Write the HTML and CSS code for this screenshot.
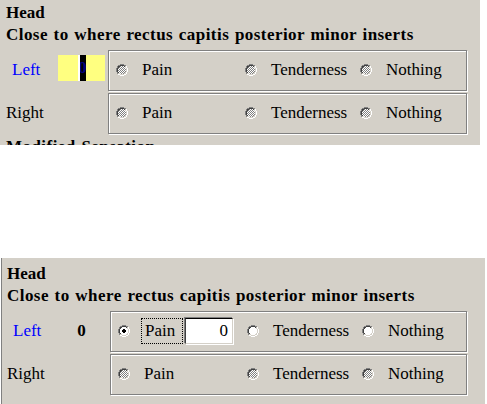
FILE: index.html
```html
<!DOCTYPE html>
<html>
<head>
<meta charset="utf-8">
<link rel="stylesheet" href="styles.css">
</head>
<body>
<svg class="defs" width="0" height="0" aria-hidden="true">
  <defs>
    <pattern id="chk" width="2" height="2" patternUnits="userSpaceOnUse">
      <rect width="2" height="2" fill="#ffffff"/>
      <rect width="1" height="1" fill="#808080"/>
      <rect x="1" y="1" width="1" height="1" fill="#808080"/>
    </pattern>
    <symbol id="rframe" viewBox="0 0 12 12">
      <path fill="#808080" d="M4 0h4v1h-4z M2 1h2v1h-2z M8 1h2v1h-2z M1 2h1v2h-1z M0 4h1v4h-1z M1 8h1v2h-1z"/>
      <path fill="#ffffff" d="M10 2h1v2h-1z M11 4h1v4h-1z M10 8h1v2h-1z M2 10h2v1h-2z M8 10h2v1h-2z M4 11h4v1h-4z"/>
      <path fill="#404040" d="M4 1h4v1h-4z M2 2h2v1h-2z M8 2h1v1h-1z M2 3h1v1h-1z M1 4h1v4h-1z M2 8h1v1h-1z"/>
      <path fill="#d4d0c8" d="M9 2h1v1h-1z M9 3h1v1h-1z M10 4h1v4h-1z M9 8h1v1h-1z M2 9h2v1h-2z M8 9h2v1h-2z M4 10h4v1h-4z"/>
    </symbol>
    <symbol id="rgray" viewBox="0 0 12 12">
      <path fill="url(#chk)" d="M4 2H8V3H9V4H10V8H9V9H8V10H4V9H3V8H2V4H3V3H4Z"/>
      <use href="#rframe" width="12" height="12"/>
    </symbol>
    <symbol id="rwhite" viewBox="0 0 12 12">
      <path fill="#ffffff" d="M4 2H8V3H9V4H10V8H9V9H8V10H4V9H3V8H2V4H3V3H4Z"/>
      <use href="#rframe" width="12" height="12"/>
    </symbol>
    <symbol id="ron" viewBox="0 0 12 12">
      <use href="#rwhite" width="12" height="12"/>
      <path fill="#000000" d="M5 4h2v1h-2z M4 5h4v2h-4z M5 7h2v1h-2z"/>
    </symbol>
  </defs>
</svg>

<div class="panel top">
  <div class="title">Head</div>
  <div class="title wide">Close to where rectus capitis posterior minor inserts</div>
  <div class="row first">
    <span class="side left">Left</span>
    <span class="val yellow"><span class="sel">0</span></span>
    <div class="group">
      <span class="opt"><svg class="radio" width="12" height="12"><use href="#rgray" width="12" height="12"/></svg>Pain</span>
      <span class="opt"><svg class="radio" width="12" height="12"><use href="#rgray" width="12" height="12"/></svg>Tenderness</span>
      <span class="opt"><svg class="radio" width="12" height="12"><use href="#rgray" width="12" height="12"/></svg>Nothing</span>
    </div>
  </div>
  <div class="row">
    <span class="side">Right</span>
    <span class="val"></span>
    <div class="group">
      <span class="opt"><svg class="radio" width="12" height="12"><use href="#rgray" width="12" height="12"/></svg>Pain</span>
      <span class="opt"><svg class="radio" width="12" height="12"><use href="#rgray" width="12" height="12"/></svg>Tenderness</span>
      <span class="opt"><svg class="radio" width="12" height="12"><use href="#rgray" width="12" height="12"/></svg>Nothing</span>
    </div>
  </div>
  <div class="title wide next">Modified Sensation</div>
</div>

<div class="panel bottom">
  <div class="title">Head</div>
  <div class="title wide">Close to where rectus capitis posterior minor inserts</div>
  <div class="row first">
    <span class="side left">Left</span>
    <span class="val bold">0</span>
    <div class="group">
      <span class="opt"><svg class="radio" width="12" height="12"><use href="#ron" width="12" height="12"/></svg><span class="focus">Pain</span><span class="input">0</span></span>
      <span class="opt"><svg class="radio" width="12" height="12"><use href="#rwhite" width="12" height="12"/></svg>Tenderness</span>
      <span class="opt"><svg class="radio" width="12" height="12"><use href="#rwhite" width="12" height="12"/></svg>Nothing</span>
    </div>
  </div>
  <div class="row">
    <span class="side">Right</span>
    <span class="val"></span>
    <div class="group">
      <span class="opt"><svg class="radio" width="12" height="12"><use href="#rgray" width="12" height="12"/></svg>Pain</span>
      <span class="opt"><svg class="radio" width="12" height="12"><use href="#rgray" width="12" height="12"/></svg>Tenderness</span>
      <span class="opt"><svg class="radio" width="12" height="12"><use href="#rgray" width="12" height="12"/></svg>Nothing</span>
    </div>
  </div>
</div>
</body>
</html>
```

FILE: styles.css
```css
html, body {
  margin: 0;
  padding: 0;
  background: #ffffff;
}

body {
  font-family: "Liberation Serif", "Times New Roman", serif;
  font-size: 17px;
  line-height: 20px;
  color: #000000;
}

.defs {
  display: block;
  width: 0;
  height: 0;
  overflow: hidden;
}

.panel {
  background: #d4d0c8;
  box-sizing: border-box;
  overflow: hidden;
}

.panel.top {
  width: 480px;
  height: 145px;
  padding: 2px 0 0 6px;
}

.panel.bottom {
  margin-top: 113px;
  margin-left: 1px;
  width: 484px;
  height: 146px;
  border-left: 1px solid #808080;
  padding: 5px 0 0 5px;
}

.title {
  font-weight: bold;
  line-height: 22px;
  white-space: nowrap;
}

.title.wide {
  letter-spacing: 0.45px;
  word-spacing: 1px;
}

.title.next {
  margin-top: 2px;
}

.row {
  display: grid;
  grid-template-columns: 52px 47px 362px;
  align-items: center;
  margin-top: 2px;
}

.row.first {
  margin-top: 4px;
}

.bottom .row {
  grid-template-columns: 51px 47px 362px;
}

.side {
  white-space: nowrap;
  margin-bottom: 2px;
}

.side.left {
  padding-left: 6px;
  color: #0000ff;
}

.val {
  height: 26px;
  display: flex;
  justify-content: center;
  align-items: center;
}

.val.bold {
  font-weight: bold;
  height: 20px;
  margin-bottom: 2px;
}

.val.yellow {
  background: #ffff80;
  margin-bottom: 5px;
}

.sel {
  width: 6px;
  height: 26px;
  border-left: 2px solid #ffffff;
  background: #000000;
  color: #000080;
  font-weight: bold;
  line-height: 26px;
  overflow: hidden;
  display: flex;
  justify-content: center;
}

.group {
  height: 41px;
  box-sizing: border-box;
  margin-left: 3px;
  border: 1px solid #808080;
  box-shadow: inset 1px 1px 0 #ffffff, 1px 1px 0 #ffffff;
  display: grid;
  grid-template-columns: 129px 115px auto;
  align-items: center;
  padding: 0 0 2px 7px;
}

.bottom .group {
  margin-left: 5px;
}

.opt {
  display: flex;
  align-items: center;
  white-space: nowrap;
}

.radio {
  flex: none;
  display: block;
  margin-right: 14px;
  shape-rendering: crispEdges;
}

.focus {
  box-sizing: border-box;
  width: 42px;
  height: 26px;
  margin-left: -3px;
  padding-left: 3px;
  border: 1px dotted #000000;
  display: flex;
  align-items: center;
}

.input {
  box-sizing: border-box;
  width: 48px;
  height: 26px;
  margin-left: 2px;
  background: #ffffff;
  border-top: 1px solid #000000;
  border-left: 1px solid #404040;
  border-right: 1px solid #d4d0c8;
  border-bottom: 1px solid #d4d0c8;
  box-shadow: -1px -1px 0 #808080, 1px 1px 0 #ffffff;
  display: flex;
  justify-content: flex-end;
  align-items: center;
  padding-right: 4px;
}
```
